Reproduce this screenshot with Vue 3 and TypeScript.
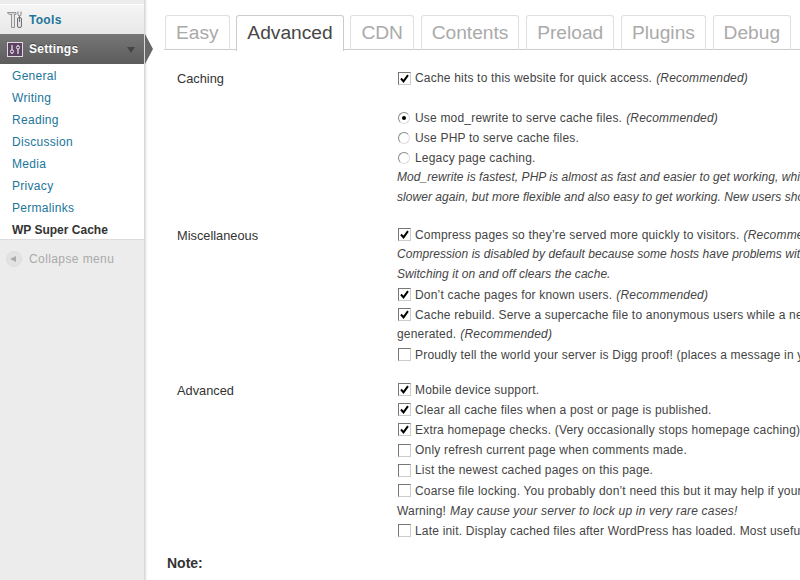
<script setup lang="ts">
type Line = { text: string; em?: string; control?: "check" | "on" | "radio"; checked?: boolean; italic?: boolean; gap?: boolean };

const tabs = ["Easy", "Advanced", "CDN", "Contents", "Preload", "Plugins", "Debug"];
const menu = ["General", "Writing", "Reading", "Discussion", "Media", "Privacy", "Permalinks"];

const sections: { label: string; lines: Line[] }[] = [
  {
    label: "Caching",
    lines: [
      { control: "check", checked: true, text: "Cache hits to this website for quick access.", em: "(Recommended)" },
      { gap: true, text: "" },
      { control: "on", text: "Use mod_rewrite to serve cache files.", em: "(Recommended)" },
      { control: "radio", text: "Use PHP to serve cache files." },
      { control: "radio", text: "Legacy page caching." },
      { italic: true, text: "Mod_rewrite is fastest, PHP is almost as fast and easier to get working, while legacy caching is" },
      { italic: true, text: "slower again, but more flexible and also easy to get working. New users should use PHP." },
    ],
  },
  {
    label: "Miscellaneous",
    lines: [
      { control: "check", checked: true, text: "Compress pages so they’re served more quickly to visitors.", em: "(Recommended)" },
      { italic: true, text: "Compression is disabled by default because some hosts have problems with compressed files." },
      { italic: true, text: "Switching it on and off clears the cache." },
      { control: "check", checked: true, text: "Don’t cache pages for known users.", em: "(Recommended)" },
      { control: "check", checked: true, text: "Cache rebuild. Serve a supercache file to anonymous users while a new file is being" },
      { text: "generated.", em: "(Recommended)" },
      { control: "check", text: "Proudly tell the world your server is Digg proof! (places a message in your blog's footer)" },
    ],
  },
  {
    label: "Advanced",
    lines: [
      { control: "check", checked: true, text: "Mobile device support." },
      { control: "check", checked: true, text: "Clear all cache files when a post or page is published." },
      { control: "check", checked: true, text: "Extra homepage checks. (Very occasionally stops homepage caching)" },
      { control: "check", text: "Only refresh current page when comments made." },
      { control: "check", text: "List the newest cached pages on this page." },
      { control: "check", text: "Coarse file locking. You probably don’t need this but it may help if your server is slow." },
      { text: "Warning!", em: "May cause your server to lock up in very rare cases!" },
      { control: "check", text: "Late init. Display cached files after WordPress has loaded. Most useful in legacy mode." },
    ],
  },
];
</script>

<template>
  <div class="page">
    <aside class="sidebar">
      <div class="top-item">
        <svg class="tools-icon" width="16" height="17" viewBox="0 0 16 17">
          <path d="M.5 1.500h8.500v2H7.500v13h-3v-13H3C1.800 3.500 1 2.800.5 1.500z" fill="#d6d6d6" stroke="#808080" stroke-width=".8" />
          <path d="M6 4v12" stroke="#f4f4f4" stroke-width="1" />
          <path d="M11 .5v3l1 1.500h1l1-1.500v-3" fill="none" stroke="#808080" stroke-width="1" />
          <rect x="10.500" y="6.500" width="4" height="10" rx="1.500" fill="#e2e2e2" stroke="#707070" stroke-width="1" />
          <path d="M12.500 5v6" stroke="#707070" stroke-width="1" />
        </svg>
        <span class="top-link">Tools</span>
      </div>
      <div class="current-item">
        <svg class="settings-icon" width="16" height="15" viewBox="0 0 16 15">
          <rect x=".5" y=".5" width="15" height="14" fill="#5a4460" stroke="#e4d4e6" />
          <path d="M5 3v9M11 3v9" stroke="#f2e6f2" stroke-width="1.200" />
          <circle cx="5" cy="9.500" r="1.600" fill="#5a4460" stroke="#f2e6f2" />
          <circle cx="11" cy="5.500" r="1.600" fill="#5a4460" stroke="#f2e6f2" />
        </svg>
        <span class="current-label">Settings</span>
        <span class="caret"></span>
        <span class="pointer"></span>
      </div>
      <ul class="submenu">
        <li v-for="item in menu" :key="item">{{ item }}</li>
        <li class="active">WP Super Cache</li>
      </ul>
      <div class="collapse">
        <span class="collapse-btn"><span class="collapse-tri"></span></span>
        <span>Collapse menu</span>
      </div>
    </aside>

    <main class="content">
      <nav class="tabs">
        <span v-for="tab in tabs" :key="tab" class="tab" :class="{ selected: tab === 'Advanced' }">{{ tab }}</span>
      </nav>

      <section v-for="section in sections" :key="section.label" class="section">
        <div class="label">{{ section.label }}</div>
        <div class="lines">
          <div v-for="(line, i) in section.lines" :key="i" class="line" :class="{ italic: line.italic, plain: !line.control }">
            <span v-if="line.control === 'check'" class="check">
              <svg v-if="line.checked" width="9" height="9" viewBox="0 0 9 9">
                <path d="M1 4.500l2.500 2.800L8 1.200" fill="none" stroke="#000" stroke-width="2" />
              </svg>
            </span>
            <span v-else-if="line.control" class="radio" :class="{ on: line.control === 'on' }"></span>
            <span>{{ line.text }}</span>
            <em v-if="line.em">{{ line.em }}</em>
          </div>
        </div>
      </section>

      <h3 class="note">Note:</h3>
    </main>
  </div>
</template>

<style>
html,
body {
  margin: 0;
  background: #fff;
}
</style>

<style scoped>
.page {
  display: flex;
  width: 800px;
  height: 580px;
  overflow: hidden;
  font-family: "Liberation Sans", Arial, sans-serif;
  font-size: 12px;
  color: #333;
  background: #fff;
}

.sidebar {
  flex: none;
  width: 145px;
  height: 580px;
  padding-top: 4px;
  box-sizing: border-box;
  background: #ececec;
  border-right: 1px solid #d8d8d8;
  box-shadow: 1px 0 2px #ddd;
}

.top-item {
  display: flex;
  align-items: center;
  height: 30px;
  background: linear-gradient(#f5f5f5, #e8e8e8);
  border-top: 1px solid #fff;
  box-sizing: border-box;
}

.tools-icon {
  margin: 0 6px 0 7px;
}

.top-link {
  font-weight: bold;
  letter-spacing: 0.3px;
  color: #21759b;
}

.current-item {
  position: relative;
  display: flex;
  align-items: center;
  height: 30px;
  background: linear-gradient(#777, #5c5c5c);
  color: #fff;
}

.settings-icon {
  margin: 0 6px 0 7px;
}

.current-label {
  font-weight: bold;
  letter-spacing: 0.25px;
  text-shadow: 0 -1px 0 #444;
}

.caret {
  position: absolute;
  left: 127px;
  top: 13px;
  border-left: 4px solid transparent;
  border-right: 4px solid transparent;
  border-top: 6px solid #444;
}

.pointer {
  position: absolute;
  left: 145px;
  top: 0;
  border-top: 15px solid transparent;
  border-bottom: 15px solid transparent;
  border-left: 8px solid #686868;
}

.submenu {
  list-style: none;
  margin: 0;
  padding: 1px 0 0;
  height: 176px;
  box-sizing: border-box;
  background: #fff;
  border-bottom: 1px solid #dcdcdc;
}

.submenu li {
  height: 22px;
  line-height: 22px;
  padding-left: 12px;
  letter-spacing: 0.3px;
  color: #21759b;
}

.submenu .active {
  font-weight: bold;
  letter-spacing: 0;
  color: #333;
}

.collapse {
  display: flex;
  align-items: center;
  gap: 7px;
  padding: 11px 0 0 6px;
  letter-spacing: 0.4px;
  color: #aaa;
}

.collapse-btn {
  display: flex;
  align-items: center;
  justify-content: center;
  width: 16px;
  height: 16px;
  box-sizing: border-box;
  border: 1px solid #ddd;
  border-radius: 50%;
  background: #e2e2e2;
}

.collapse-tri {
  border-top: 3px solid transparent;
  border-bottom: 3px solid transparent;
  border-right: 6px solid #aaa;
  margin-right: 2px;
}

.content {
  flex: none;
  width: 655px;
  padding: 15px 0 0 19px;
  box-sizing: border-box;
  white-space: nowrap;
}

.tabs {
  display: flex;
  gap: 6.7px;
  height: 35px;
  width: 640px;
  box-sizing: border-box;
  border-bottom: 1px solid #ccc;
  padding-left: 1px;
  margin-bottom: 18px;
}

.tab {
  height: 34px;
  padding: 0 10px;
  line-height: 33px;
  font-size: 19.2px;
  color: #aaa;
  border: 1px solid #dfdfdf;
  border-bottom: none;
  border-radius: 3px 3px 0 0;
}

.tab.selected {
  height: 35px;
  color: #464646;
  border-color: #ccc;
  background: #fff;
}

.section {
  display: flex;
  margin-bottom: 15px;
}

.section:first-of-type {
  margin-bottom: 16.5px;
}

.section:last-of-type .line {
  height: 20.2px;
}

.section:last-of-type .line.plain {
  padding-bottom: 0;
}

.label {
  flex: none;
  width: 233px;
  box-sizing: border-box;
  padding: 1px 0 0 13px;
  font-size: 12.8px;
  line-height: 20px;
  color: #333;
}

.line {
  display: flex;
  align-items: center;
  gap: 4px;
  height: 20px;
  line-height: 20px;
  letter-spacing: 0.19px;
  color: #444;
}

.line.plain {
  padding-bottom: 2px;
  box-sizing: border-box;
}

.line.italic {
  font-style: italic;
  letter-spacing: 0.05px;
}

.check {
  flex: none;
  display: flex;
  align-items: center;
  justify-content: center;
  width: 13px;
  height: 13px;
  margin-left: 1px;
  box-sizing: border-box;
  border: 1px solid #777;
  border-right-color: #ccc;
  border-bottom-color: #ccc;
  background: #fff;
}

.radio {
  flex: none;
  position: relative;
  width: 12px;
  height: 12px;
  margin-left: 1px;
  margin-right: 1px;
  box-sizing: border-box;
  border: 1px solid #888;
  border-right-color: #ddd;
  border-bottom-color: #ddd;
  border-radius: 50%;
  background: #fff;
}

.radio.on::after {
  content: "";
  position: absolute;
  left: 3px;
  top: 3px;
  width: 4px;
  height: 4px;
  border-radius: 50%;
  background: #000;
}

.note {
  margin: -3px 0 0 3px;
  font-size: 14px;
  line-height: 20px;
  color: #333;
}
</style>
